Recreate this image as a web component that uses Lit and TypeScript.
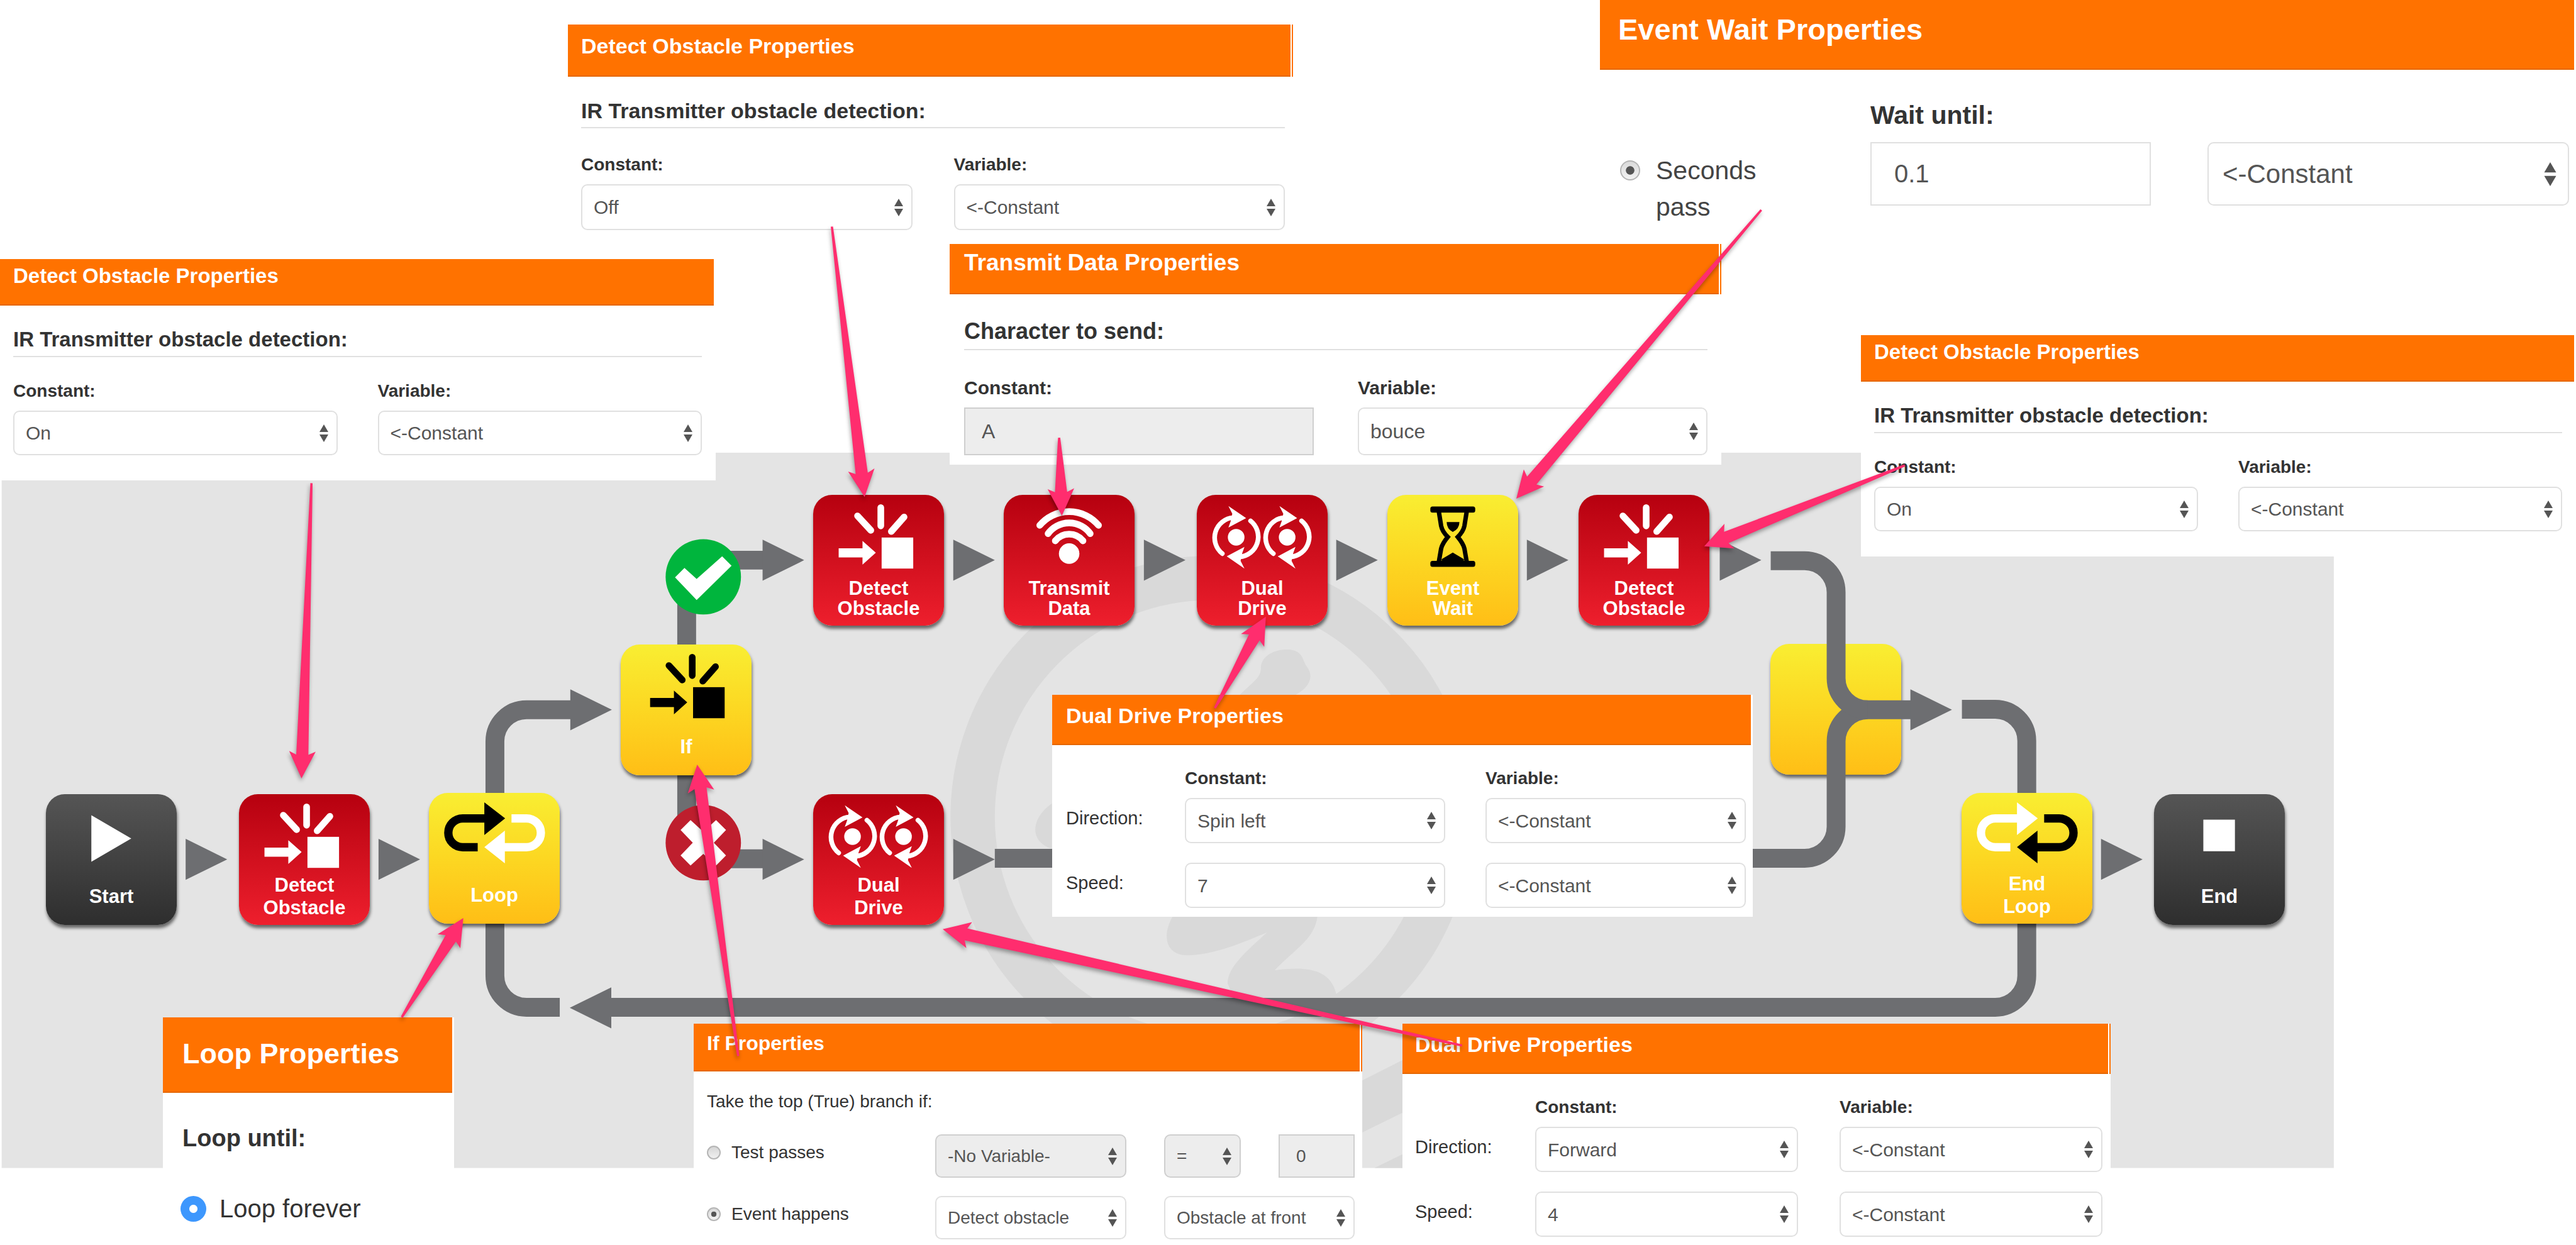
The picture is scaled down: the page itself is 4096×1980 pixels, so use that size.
import { LitElement, html, svg, css, nothing } from "lit";
import { customElement } from "lit/decorators.js";
import { styleMap } from "lit/directives/style-map.js";

// Size of the free canvas in layout units; positions become percentages of it.
const STAGE_W = 4096;
const STAGE_H = 1980;

const place = (x: number, y: number, w: number) =>
  styleMap({
    left: `${(x / STAGE_W) * 100}%`,
    top: `${(y / STAGE_H) * 100}%`,
    width: `${(w / STAGE_W) * 100}%`,
  });

type Tone = "red" | "yellow" | "dark";

interface FlowNode {
  x: number;
  y: number;
  tone: Tone;
  icon: unknown;
  lines: string[];
  compact?: boolean;
}

const detectIcon = (color: string, dx = 0) => svg`
  <g transform="translate(${dx} 0)" fill=${color} stroke=${color}>
    <path d="M122 23V56M80 38L104 64M164 40L141 66" fill="none" stroke-width="12" stroke-linecap="round"/>
    <path d="M46 96.5H89V83L113 104.5L89 126V113H46Z" stroke="none"/>
    <rect x="123.500" y="77" width="57" height="56" stroke="none"/>
  </g>`;

const rotor = (dx: number) => svg`
  <g transform="translate(${dx} 0)">
    <circle cx="71" cy="76.500" r="15" fill="#fff"/>
    ${[0, 180].map(
      (turn) => svg`
      <g transform="rotate(${turn} 71.500 76.500)">
        <path d="M46 106A36.500 36.500 0 0 1 66 41" fill="none" stroke="#fff" stroke-width="8.500" stroke-linecap="round"/>
        <path d="M57 20L89 42L57 59L61 48L64 34Z" fill="#fff"/>
      </g>`
    )}
  </g>`;

const dualIcon = svg`${rotor(0)}${rotor(92)}`;

const transmitIcon = svg`
  <g fill="none" stroke="#fff" stroke-width="12" stroke-linecap="round">
    <path d="M65 55A69 69 0 0 1 171 55"/>
    <path d="M80 70A47 47 0 0 1 156 70"/>
    <path d="M93 83A32 32 0 0 1 143 83"/>
  </g>
  <circle cx="118" cy="106" r="18.500" fill="#fff"/>`;

const hourglassIcon = svg`
  <rect x="77.500" y="21" width="81" height="11" rx="4"/>
  <rect x="77.500" y="119" width="81" height="11" rx="4"/>
  <g fill="none" stroke="#000" stroke-width="8">
    <path d="M93 31L97 56Q99 66 109 76Q99 88 97 97L93 120"/>
    <path d="M143 31L139 56Q137 66 127 76Q137 88 139 97L143 120"/>
  </g>
  <path d="M107 49H130Q130 61 118 67Q107 61 107 49Z"/>
  <path d="M118 104L138 116V121H98V116Z"/>`;

const loopIcon = (out: string, back: string) => svg`
  <g fill="none" stroke-width="15">
    <path d="M88 98H61A26 26 0 0 1 61 46H101" stroke=${out}/>
    <path d="M149 46H176A26 26 0 0 1 176 98H136" stroke=${back}/>
  </g>
  <path d="M100 17L137.500 46L100 76Z" fill=${out}/>
  <path d="M137 68L100 98L137 127Z" fill=${back}/>`;

const MERGE: FlowNode = { x: 2815, y: 1024, tone: "yellow", icon: nothing, lines: [] };

const NODES: FlowNode[] = [
  { x: 73, y: 1263, tone: "dark", icon: svg`<path d="M82 38L154 80L82 122Z" fill="#fff"/>`, lines: ["Start"] },
  { x: 380, y: 1263, tone: "red", icon: detectIcon("#fff"), lines: ["Detect", "Obstacle"] },
  { x: 682, y: 1261, tone: "yellow", icon: loopIcon("#000", "#fff"), lines: ["Loop"] },
  { x: 987, y: 1025, tone: "yellow", icon: detectIcon("#000", 7), lines: ["If"] },
  { x: 1293, y: 787, tone: "red", icon: detectIcon("#fff"), lines: ["Detect", "Obstacle"], compact: true },
  { x: 1596, y: 787, tone: "red", icon: transmitIcon, lines: ["Transmit", "Data"], compact: true },
  { x: 1903, y: 787, tone: "red", icon: dualIcon, lines: ["Dual", "Drive"], compact: true },
  { x: 2206, y: 787, tone: "yellow", icon: hourglassIcon, lines: ["Event", "Wait"], compact: true },
  { x: 2510, y: 787, tone: "red", icon: detectIcon("#fff"), lines: ["Detect", "Obstacle"], compact: true },
  { x: 1293, y: 1263, tone: "red", icon: dualIcon, lines: ["Dual", "Drive"] },
  { x: 3119, y: 1261, tone: "yellow", icon: loopIcon("#fff", "#000"), lines: ["End", "Loop"] },
  { x: 3425, y: 1263, tone: "dark", icon: svg`<rect x="89" y="46" width="57" height="57" fill="#fff"/>`, lines: ["End"] },
];

// Flow arrow heads: left edge, middle line.
const HEADS: [number, number][] = [
  [335, 1551], [683, 1551], [1029, 1281],
  [1376, 1011], [1720, 1011], [2064, 1011], [2411, 1011], [2755, 1011], [3103, 1011],
  [1376, 1551], [1720, 1551], [3447, 1281], [3791, 1551],
];

// Callout arrows: tail x, tail y, tip x, tip y.
const CALLOUTS: [number, number, number, number][] = [
  [562, 872, 544, 1405],
  [1501, 409, 1560, 897],
  [1911, 790, 1916, 931],
  [3178, 379, 2736, 900],
  [3437, 840, 3075, 986],
  [2192, 1278, 2284, 1113],
  [725, 1836, 836, 1657],
  [1332, 1906, 1258, 1380],
  [2638, 1887, 1701, 1677],
];

function calloutPoints([x1, y1, x2, y2]: [number, number, number, number]) {
  const len = Math.hypot(x2 - x1, y2 - y1);
  const ux = (x2 - x1) / len;
  const uy = (y2 - y1) / len;
  const at = (along: number, side: number) =>
    `${(x1 + ux * along - uy * side).toFixed(1)},${(y1 + uy * along + ux * side).toFixed(1)}`;
  return [
    at(0, -2), at(len - 43, -11), at(len - 49, -24), at(len, 0),
    at(len - 49, 24), at(len - 43, 11), at(0, 2),
  ].join(" ");
}

@customElement("app-root")
export class AppRoot extends LitElement {
  static styles = css`
    :host {
      display: block;
      background: #fff;
      color: #333;
      font-family: "Liberation Sans", Arial, sans-serif;
    }
    * { box-sizing: border-box; }
    h2, h3, p { margin: 0; }
    .stage {
      position: relative;
      width: 100%;
      aspect-ratio: 4096 / 1980;
      overflow: hidden;
    }
    .layer {
      position: absolute;
      inset: 0;
      width: 100%;
      height: 100%;
      pointer-events: none;
    }
    .callouts { filter: drop-shadow(-1px 4px 3px rgba(0, 0, 0, 0.35)); }

    .node {
      position: absolute;
      display: grid;
      aspect-ratio: 1;
      padding: 0;
      border: 0;
      border-radius: 30px;
      box-shadow: 1px 5px 5px rgba(0, 0, 0, 0.55);
      color: #fff;
      font: bold 31px/36px "Liberation Sans", Arial, sans-serif;
    }
    .red { background: linear-gradient(#b6000f, #c90c1a 35%, #ee1f2d); }
    .yellow { background: linear-gradient(#f9ee32, #fcd722 50%, #ffbe16); }
    .dark { background: linear-gradient(#555, #2e2e2e); }
    .node svg, .caption { grid-area: 1 / 1; }
    .node svg { width: 100%; height: 100%; }
    .caption {
      align-self: end;
      display: flex;
      flex-direction: column;
      justify-content: center;
      height: 72px;
      margin-bottom: 9px;
      text-align: center;
    }
    .compact { padding-top: 4px; line-height: 32px; }

    .panel {
      position: absolute;
      background: #fff;
      --title: 34px;
      --bar: 80px;
      --bar-pad: 15px;
      --label: 28px;
      --text: 30px;
      --field: 72px;
      --inset: 18px;
      --left: 21px;
      --right: 22px;
      --gap: 64px;
    }
    .bar {
      height: var(--bar);
      margin: 0 3px 0 0;
      padding: var(--bar-pad) 0 0 var(--left);
      background: #ff7200;
      border-bottom: 2px solid #e56600;
      color: #fff;
      font-size: var(--title);
      font-weight: bold;
      line-height: 36px;
      white-space: nowrap;
    }
    .edged .bar {
      margin-right: 4px;
      box-shadow: 2px 0 #fff, 4px 0 #ff7200;
    }
    .section {
      margin: 36px var(--right) 0 var(--left);
      padding-bottom: 8px;
      border-bottom: 2px solid #e0e0e0;
      font-size: var(--title);
      font-weight: bold;
      line-height: 36px;
    }
    .pair {
      display: grid;
      grid-template-columns: 1fr 1fr;
      gap: 16px var(--gap);
      margin-top: 39px;
      padding: 0 var(--right) 40px var(--left);
    }
    .label {
      font-size: var(--label);
      font-weight: bold;
      line-height: 30px;
    }
    .field { display: grid; min-width: 0; }
    .field > * { grid-area: 1 / 1; }
    .control {
      width: 100%;
      height: var(--field);
      margin: 0;
      padding: 0 var(--inset);
      border: 2px solid #e0e0e0;
      border-radius: 10px;
      background: #fff;
      color: #555;
      font: var(--text) "Liberation Sans", Arial, sans-serif;
      appearance: none;
      opacity: 1;
    }
    input.control { border-radius: 0; padding-left: 26px; }
    .control:disabled { background: #ededed; border-color: #cfcfcf; }
    .spinner {
      align-self: center;
      justify-self: end;
      width: 14px;
      height: 28px;
      margin-right: 15px;
      pointer-events: none;
    }
    .radio {
      flex: none;
      width: 22px;
      height: 22px;
      margin: 0;
      border: 2px solid #b5b5b5;
      border-radius: 50%;
      background: linear-gradient(#d6d6d6, #f0f0f0);
      appearance: none;
    }
    .radio:checked {
      background: radial-gradient(circle, #555 0 32%, transparent 36%), linear-gradient(#dadada, #f2f2f2);
    }
    .choice { display: flex; align-items: center; }

    .detect { --title: 33px; --bar: 74px; --bar-pad: 9px; --field: 71px; }
    .off { --bar: 83px; --bar-pad: 16px; --field: 73px; --right: 13px; --gap: 66px; }
    .off .pair { margin-top: 43px; }
    .transmit { --title: 37px; --bar-pad: 12px; --label: 30px; --text: 32px; --field: 76px; --left: 23px; --gap: 70px; }
    .transmit .section { margin-top: 39px; font-size: 36px; line-height: 40px; }
    .transmit .pair { margin-top: 45px; padding-bottom: 15px; }

    .dual { --right: 11px; --left: 22px; }
    .low { --left: 20px; --right: 13px; --gap: 66px; }
    .rows {
      display: grid;
      grid-template-columns: 125px 1fr 1fr;
      column-gap: var(--gap);
      margin-top: 38px;
      padding: 0 var(--right) 14px var(--left);
    }
    .rows .label { padding-bottom: 16px; }
    .rows .name {
      align-self: center;
      padding-bottom: 8px;
      font-size: 29px;
    }
    .rows .second { margin-top: 31px; }

    .branch { --title: 32px; --bar: 76px; --bar-pad: 13px; --text: 28px; --field: 69px; --right: 12px; }
    .intro { margin: 32px 0 36px var(--left); font-size: 28px; line-height: 32px; }
    .tests {
      display: grid;
      grid-template-columns: 303fr 304fr 122fr 121fr;
      gap: 29px 60px;
      padding: 0 var(--right) 10px var(--left);
    }
    .tests .choice { gap: 17px; padding-bottom: 12px; font-size: 28px; }
    .wide { grid-column: span 2; }

    .wait { --title: 47px; --bar: 111px; --bar-pad: 29px; --left: 29px; --right: 11px; --label: 41px; --text: 42px; --field: 101px; --inset: 22px; }
    .wait-form {
      display: grid;
      grid-template-columns: 308fr 446fr 575fr;
      gap: 20px 90px;
      align-items: start;
      margin-top: 49px;
      padding: 0 var(--right) 0 32px;
    }
    .wait-form .label { grid-column: 2 / -1; line-height: 46px; }
    .wait-form input.control { padding-left: 36px; --text: 40px; }
    .wait-form .spinner { width: 20px; height: 38px; margin-right: 20px; }
    .wait-form .choice { align-items: flex-start; gap: 25px; margin-top: 16px; font-size: 41px; line-height: 58px; color: #444; }
    .wait-form .choice label { max-width: 200px; }
    .wait-form .radio { width: 32px; height: 32px; margin-top: 13px; }

    .loop { --title: 45px; --bar: 120px; --bar-pad: 40px; --left: 31px; }
    .until { margin: 51px 0 69px var(--left); font-size: 38px; font-weight: bold; line-height: 42px; }
    .loop .choice { gap: 21px; padding: 0 0 36px 28px; font-size: 40px; line-height: 44px; }
    .loop .radio {
      width: 41px;
      height: 41px;
      border: 0;
      background: radial-gradient(circle, #fff 0 6px, #3d97fd 7px);
    }
  `;

  private node(n: FlowNode) {
    return html`<button class="node ${n.tone}" style=${place(n.x, n.y, 208)} aria-label=${n.lines.join(" ") || "Merge"}>
      <svg viewBox="0 0 236 236" aria-hidden="true">${n.icon}</svg>
      <span class="caption ${n.compact ? "compact" : ""}">${n.lines.map((l) => html`<span>${l}</span>`)}</span>
    </button>`;
  }

  private select(value: string, labelledBy: string, disabled = false, cls = "") {
    return html`<span class="field ${cls}">
      <select class="control" aria-labelledby=${labelledBy} ?disabled=${disabled}><option>${value}</option></select>
      <svg class="spinner" viewBox="0 0 14 28" aria-hidden="true"><path d="M7 0L14 12H0ZM0 16H14L7 28Z" fill="#555"/></svg>
    </span>`;
  }

  private detect(id: string, cls: string, value: string, x: number, y: number, w: number) {
    return html`<section class="panel ${cls}" style=${place(x, y, w)}>
      <h2 class="bar">Detect Obstacle Properties</h2>
      <h3 class="section">IR Transmitter obstacle detection:</h3>
      <div class="pair">
        <label class="label" id="${id}-c">Constant:</label>
        <label class="label" id="${id}-v">Variable:</label>
        ${this.select(value, `${id}-c`)}
        ${this.select("<-Constant", `${id}-v`)}
      </div>
    </section>`;
  }

  private dual(id: string, cls: string, direction: string, speed: string, x: number, y: number, w: number) {
    return html`<section class="panel dual ${cls}" style=${place(x, y, w)}>
      <h2 class="bar">Dual Drive Properties</h2>
      <div class="rows">
        <span></span>
        <label class="label" id="${id}-c">Constant:</label>
        <label class="label" id="${id}-v">Variable:</label>
        <label class="name" id="${id}-d">Direction:</label>
        ${this.select(direction, `${id}-d ${id}-c`)}
        ${this.select("<-Constant", `${id}-d ${id}-v`)}
        <label class="name second" id="${id}-s">Speed:</label>
        ${this.select(speed, `${id}-s ${id}-c`, false, "second")}
        ${this.select("<-Constant", `${id}-s ${id}-v`, false, "second")}
      </div>
    </section>`;
  }

  private backdrop() {
    return html`<svg class="layer" viewBox="0 0 4648 2247" preserveAspectRatio="none" aria-hidden="true">
      <rect x="3" y="817" width="4208" height="1291" fill="#e4e4e4"/>
      <g fill="#d9d9d9">
        <circle cx="2186" cy="1474" r="431" fill="none" stroke="#d9d9d9" stroke-width="80"/>
        <path d="M2237 1254C2262 1230 2276 1222 2275 1205C2276 1178 2312 1168 2335 1174C2352 1180 2350 1192 2358 1203C2372 1222 2362 1240 2338 1254Z"/>
        <path d="M1898 1450C1858 1478 1858 1520 1898 1532Z"/>
        <path d="M2116 1654C2095 1690 2105 1724 2142 1724C2190 1724 2240 1702 2286 1683C2250 1716 2215 1745 2215 1775L2227 1802L2240 1830H2420L2411 1794C2400 1745 2350 1745 2300 1751C2340 1710 2372 1694 2377 1654Z"/>
        <path d="M2458 1950L2531 1913V2008L2458 2044Z"/>
        <path d="M2480 2108L2531 2083V2108Z"/>
      </g>
    </svg>`;
  }

  private wires() {
    return html`<svg class="layer" viewBox="0 0 4648 2247" preserveAspectRatio="none" aria-hidden="true">
      <g fill="none" stroke="#6d6e71" stroke-width="34">
        <path d="M893 1432V1338A57 57 0 0 1 950 1281H1030"/>
        <path d="M893 1660V1761A57 57 0 0 0 950 1818H1010"/>
        <path d="M1100 1818H3600A57 57 0 0 0 3657 1761V1660"/>
        <path d="M3540 1280H3600A57 57 0 0 1 3657 1337V1440"/>
        <path d="M1239 1170V1068A57 57 0 0 1 1296 1011H1377"/>
        <path d="M1239 1390V1493A57 57 0 0 0 1296 1550H1377"/>
        <path d="M1795 1549H3256A57 57 0 0 0 3313 1492V1338A57 57 0 0 1 3370 1281H3448"/>
        <path d="M3195 1012H3256A57 57 0 0 1 3313 1069V1224A57 57 0 0 0 3370 1281"/>
      </g>
      <g fill="#6d6e71">
        ${HEADS.map(([x, y]) => svg`<path d="M${x} ${y - 37}l75 37l-75 37Z"/>`)}
        <path d="M1028 1819L1103 1782V1856Z"/>
      </g>
      <circle cx="1269" cy="1041" r="68" fill="#00b53d"/>
      <path d="M1235 1025L1257 1045L1303 1004L1320 1021L1257 1083L1218 1042Z" fill="#fff"/>
      <circle cx="1269" cy="1521" r="68" fill="#be1e2d"/>
      <path d="M1246 1480L1269 1501L1292 1480L1310 1498L1288 1521L1310 1544L1292 1562L1269 1541L1246 1562L1228 1544L1250 1521L1228 1498Z" fill="#fff"/>
    </svg>`;
  }

  render() {
    return html`<main class="stage">
      ${this.backdrop()} ${this.node(MERGE)} ${this.wires()} ${NODES.map((n) => this.node(n))}

      ${this.detect("d1", "detect", "On", 0, 412, 1138)}
      ${this.detect("d2", "off edged", "Off", 903, 39, 1153)}
      ${this.detect("d3", "detect", "On", 2959, 533, 1137)}

      <section class="panel wait" style=${place(2544, 0, 1552)}>
        <h2 class="bar">Event Wait Properties</h2>
        <div class="wait-form">
          <label class="label" id="w-u" for="w-sec">Wait until:</label>
          <div class="choice">
            <input class="radio" type="radio" id="w-r" name="wait" checked />
            <label for="w-r">Seconds pass</label>
          </div>
          <input class="control" id="w-sec" type="text" .value=${"0.1"} />
          ${this.select("<-Constant", "w-u")}
        </div>
      </section>

      <section class="panel transmit edged" style=${place(1510, 388, 1227)}>
        <h2 class="bar">Transmit Data Properties</h2>
        <h3 class="section">Character to send:</h3>
        <div class="pair">
          <label class="label" for="t-c">Constant:</label>
          <label class="label" id="t-v">Variable:</label>
          <input class="control" id="t-c" type="text" disabled .value=${"A"} />
          ${this.select("bouce", "t-v")}
        </div>
      </section>

      ${this.dual("u1", "", "Spin left", "7", 1673, 1105, 1114)}
      ${this.dual("u2", "low edged", "Forward", "4", 2230, 1628, 1126)}

      <section class="panel loop" style=${place(259, 1618, 463)}>
        <h2 class="bar">Loop Properties</h2>
        <p class="until">Loop until:</p>
        <div class="choice">
          <input class="radio" type="radio" id="l-r" name="loop" checked />
          <label for="l-r">Loop forever</label>
        </div>
      </section>

      <section class="panel branch edged" style=${place(1103, 1628, 1063)}>
        <h2 class="bar">If Properties</h2>
        <p class="intro">Take the top (True) branch if:</p>
        <div class="tests">
          <div class="choice">
            <input class="radio" type="radio" id="b-t" name="branch" />
            <label id="b-tl" for="b-t">Test passes</label>
          </div>
          ${this.select("-No Variable-", "b-tl", true)}
          ${this.select("=", "b-tl", true)}
          <input class="control" type="text" aria-labelledby="b-tl" disabled .value=${"0"} />
          <div class="choice">
            <input class="radio" type="radio" id="b-e" name="branch" checked />
            <label id="b-el" for="b-e">Event happens</label>
          </div>
          ${this.select("Detect obstacle", "b-el")}
          ${this.select("Obstacle at front", "b-el", false, "wide")}
        </div>
      </section>

      <svg class="layer callouts" viewBox="0 0 4648 2247" preserveAspectRatio="none" aria-hidden="true">
        ${CALLOUTS.map((c) => svg`<polygon points=${calloutPoints(c)} fill="#ff2d6e"/>`)}
      </svg>
    </main>`;
  }
}
